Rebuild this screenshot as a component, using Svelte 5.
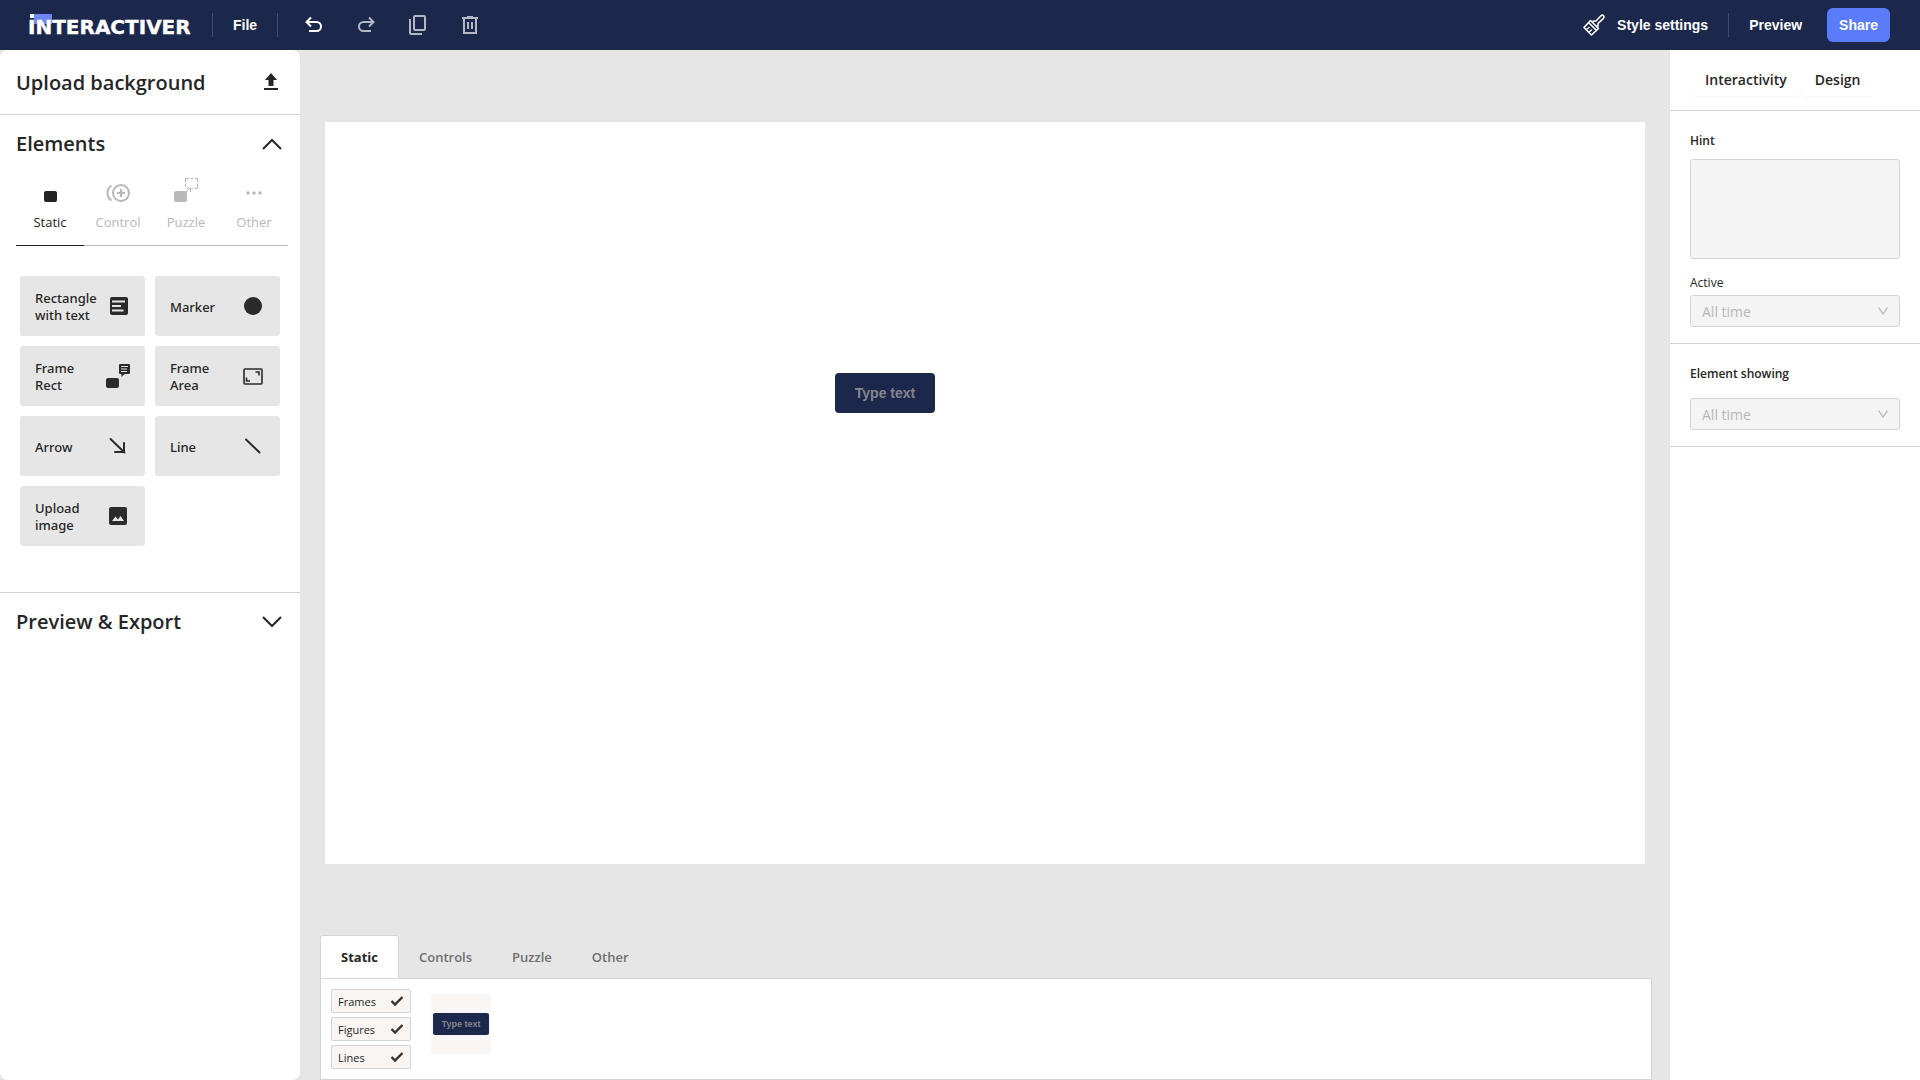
<script>
  const staticTabs = [
    { id: 'static', label: 'Static' },
    { id: 'control', label: 'Control' },
    { id: 'puzzle', label: 'Puzzle' },
    { id: 'other', label: 'Other' }
  ];
  const elements = [
    { icon: 'text', label: 'Rectangle with text' },
    { icon: 'marker', label: 'Marker' },
    { icon: 'frame', label: 'Frame Rect' },
    { icon: 'area', label: 'Frame Area' },
    { icon: 'arrow', label: 'Arrow' },
    { icon: 'line', label: 'Line' },
    { icon: 'image', label: 'Upload image' }
  ];
  const layerTabs = ['Static', 'Controls', 'Puzzle', 'Other'];
  let activeTab = $state('static');
  let activeLayer = $state('Static');
  let filters = $state([
    { label: 'Frames', on: true },
    { label: 'Figures', on: true },
    { label: 'Lines', on: true }
  ]);
</script>

<div class="app">
  <header class="topbar">
    <a class="logo" href="/" aria-label="Interactiver">
      <svg width="172" height="28" viewBox="-4 -2 172 28">
        <path d="M4 1H22V11H4z" fill="#6f86f0" />
        <rect x="0" y="1" width="4" height="4" fill="#fff" />
        <text x="-2" y="21" class="logo-text">INTERACTIVER</text>
      </svg>
    </a>
    <span class="rule"></span>
    <button class="nav file">File</button>
    <span class="rule"></span>
    <div class="tools">
      <button aria-label="Undo">
        <svg width="24" height="24" viewBox="0 0 24 24" fill="none" stroke="#fff" stroke-width="2"><path d="M9 4.5 4.5 9 9 13.500M5 9h9.500a4.500 4.500 0 0 1 0 9H7" /></svg>
      </button>
      <button aria-label="Redo">
        <svg width="24" height="24" viewBox="0 0 24 24" fill="none" stroke="#b4b8c4" stroke-width="2"><path d="M15 4.500 19.500 9 15 13.500M19 9H9.500a4.500 4.500 0 0 0 0 9H17" /></svg>
      </button>
      <button aria-label="Copy">
        <svg width="24" height="24" viewBox="0 0 24 24" fill="none" stroke="#b4b8c4" stroke-width="2"><rect x="8" y="3" width="11" height="14" rx="1" /><path d="M4 6v14a1 1 0 0 0 1 1h11" /></svg>
      </button>
      <button aria-label="Delete">
        <svg width="24" height="24" viewBox="0 0 24 24" fill="none" stroke="#b4b8c4" stroke-width="2"><path d="M4 5h16M9 4h6M6 5v15h12V5M10 9v7M14 9v7" /></svg>
      </button>
    </div>
    <div class="right">
      <button class="nav style">
        <svg width="22" height="22" viewBox="0 0 22 22" fill="none" stroke="#fff" stroke-width="1.600" stroke-linejoin="round" stroke-linecap="round"><path d="M7.500 6.500 15.500 14.500 8.500 21 1 13.500zM9.500 8.500 10.500 7 13 7 18 1.800a1.700 1.700 0 0 1 2.500 2.500L15 9.500v2.500l-1.500 .800M5.500 8.500l8 8M3.500 15.500l2.500-2M6 18l2.500-2" /></svg>
        Style settings
      </button>
      <span class="rule"></span>
      <button class="nav preview">Preview</button>
      <button class="nav share">Share</button>
    </div>
  </header>

  <div class="workspace">
    <aside class="sidebar">
      <button class="section upload">
        Upload background
        <svg width="16" height="18" viewBox="0 0 16 18" fill="#262626"><path d="M8 0 14 7H10.500V13H5.500V7H2zM1 15H15V17H1z" /></svg>
      </button>
      <section class="elements">
        <button class="section head">
          Elements
          <svg width="20" height="12" viewBox="0 0 20 12" fill="none" stroke="#262626" stroke-width="2"><path d="M1 11 10 2 19 11" /></svg>
        </button>
        <div class="tabs" role="tablist">
          {#each staticTabs as tab}
            <button role="tab" aria-selected={activeTab === tab.id} class:active={activeTab === tab.id} onclick={() => (activeTab = tab.id)}>
              <svg width="26" height="26" viewBox="0 0 26 26" fill="none" stroke="currentColor">
                {#if tab.id === 'static'}
                  <rect x="7" y="13" width="13" height="11" rx="2" fill="currentColor" stroke="none" />
                {:else if tab.id === 'control'}
                  <g stroke-width="2"><circle cx="16" cy="15" r="8" /><path d="M16 11v8M12 15h8M6.500 7.500a9 9 0 0 0 0 15" /></g>
                {:else if tab.id === 'puzzle'}
                  <rect x="1" y="13" width="13" height="11" rx="2" fill="currentColor" stroke="none" />
                  <path d="M12.500 4V.500H16M17.500 .500h2.500M21.500 .500h3V4M24.500 5.500v5H21.500M20 10.500h-1.500M12.500 5.500v3" />
                  <path d="M12 15 17 10M13.500 10H17.500V14" />
                {:else}
                  <g fill="currentColor" stroke="none"><circle cx="7" cy="15" r="1.700" /><circle cx="13" cy="15" r="1.700" /><circle cx="19" cy="15" r="1.700" /></g>
                {/if}
              </svg>
              {tab.label}
            </button>
          {/each}
        </div>
        <div class="cards">
          {#each elements as el}
            <button class="card">
              <span>{el.label}</span>
              <svg width="26" height="26" viewBox="0 0 26 26" fill="none" stroke="#2b2b2b" stroke-width="2">
                {#if el.icon === 'text'}
                  <rect x="5" y="4" width="18" height="18" rx="2" fill="#2b2b2b" stroke="none" />
                  <path d="M7 8.500h13M7 13h9M7 17.500h11.500" stroke="#e6e6e6" />
                {:else if el.icon === 'marker'}
                  <circle cx="13" cy="13" r="9" fill="#2b2b2b" stroke="none" />
                {:else if el.icon === 'frame'}
                  <g fill="#2b2b2b" stroke="none"><rect x="1" y="15" width="13" height="10" rx="2" /><path d="M15 1H24a1 1 0 0 1 1 1V10a1 1 0 0 1-1 1H19.500L16.500 14V11H15a1 1 0 0 1-1-1V2a1 1 0 0 1 1-1z" /></g>
                  <path d="M16 3.500h7M16 6h6M16 8.500h6" stroke="#e6e6e6" stroke-width="1" />
                {:else if el.icon === 'area'}
                  <rect x="4" y="6" width="18" height="15" rx="1" stroke-width="1.600" />
                  <path d="M15.500 9H19V12.500M6.500 14.500V18H10" stroke-width="1.600" />
                {:else if el.icon === 'arrow'}
                  <path d="M5.500 6 19.500 19.500M19 10V19H10" stroke-linecap="round" />
                {:else if el.icon === 'line'}
                  <path d="M6 6.500 19.500 19.500" stroke-linecap="round" />
                {:else}
                  <rect x="4" y="4" width="18" height="18" rx="2" fill="#2b2b2b" stroke="none" />
                  <path d="M7 18 10.500 13.500 13 16.500 15.500 13 19 18z" fill="#e6e6e6" stroke="none" />
                {/if}
              </svg>
            </button>
          {/each}
        </div>
      </section>
      <button class="section head">
        Preview &amp; Export
        <svg width="20" height="12" viewBox="0 0 20 12" fill="none" stroke="#262626" stroke-width="2"><path d="M1 1 10 10 19 1" /></svg>
      </button>
    </aside>

    <main>
      <div class="stage">
        <div class="canvas">
          <button class="shape">Type text</button>
        </div>
      </div>
      <div class="layers">
        <div class="layer-tabs" role="tablist">
          {#each layerTabs as tab}
            <button role="tab" aria-selected={activeLayer === tab} class:active={activeLayer === tab} onclick={() => (activeLayer = tab)}>{tab}</button>
          {/each}
        </div>
        <div class="layer-body">
          <div class="filters">
            {#each filters as f}
              <label>
                {f.label}
                <input type="checkbox" bind:checked={f.on} />
                <svg width="14" height="12" viewBox="0 0 14 12" fill="none" stroke="#333" stroke-width="2.400"><path d="M1.500 6 5 9.500 12.500 2" /></svg>
              </label>
            {/each}
          </div>
          <button class="thumb"><span>Type text</span></button>
        </div>
      </div>
    </main>

    <aside class="props">
      <div class="prop-tabs">
        <button>Interactivity</button>
        <button>Design</button>
      </div>
      <div class="group">
        <label class="title" for="hint">Hint</label>
        <textarea id="hint" disabled></textarea>
        <label class="sub" for="active">Active</label>
        <div class="select">
          <select id="active" disabled><option>All time</option></select>
          <svg width="12" height="10" viewBox="0 0 12 10" fill="none" stroke="#b8b8b8" stroke-width="1.300"><path d="M1.500 1.500 6 8 10.500 1.500" /></svg>
        </div>
      </div>
      <div class="group">
        <label class="title wide" for="showing">Element showing</label>
        <div class="select">
          <select id="showing" disabled><option>All time</option></select>
          <svg width="12" height="10" viewBox="0 0 12 10" fill="none" stroke="#b8b8b8" stroke-width="1.300"><path d="M1.500 1.500 6 8 10.500 1.500" /></svg>
        </div>
      </div>
    </aside>
  </div>
</div>

<style>
  :global(body) { margin: 0; }
  .app {
    display: flex;
    flex-direction: column;
    min-height: 100vh;
    background: #e6e6e6;
    color: #262626;
    font-family: 'Open Sans', 'Noto Sans', sans-serif;
    font-size: 13px;
  }
  .app * { box-sizing: border-box; }
  button {
    font: inherit;
    color: inherit;
    background: none;
    border: 0;
    padding: 0;
    cursor: pointer;
  }
  svg { flex: none; display: block; overflow: visible; }

  .topbar {
    display: flex;
    align-items: center;
    height: 50px;
    padding: 0 30px 0 26px;
    background: #1c274c;
    color: #fff;
  }
  .logo { margin-right: 14px; }
  .logo-text {
    font-family: 'DejaVu Sans', sans-serif;
    font-size: 20px;
    font-weight: 700;
    fill: #fff;
    stroke: #fff;
    stroke-width: 0.4;
  }
  .rule { width: 1px; height: 24px; background: #414b6b; }
  .nav {
    font-family: 'Liberation Sans', Arial, sans-serif;
    font-size: 14px;
    font-weight: 700;
  }
  .file { padding: 0 20px; }
  .tools { display: flex; gap: 28px; margin-left: 24px; }
  .right { display: flex; align-items: center; margin-left: auto; }
  .style { display: flex; align-items: center; gap: 12px; margin-right: 20px; }
  .preview { margin: 0 25px 0 20px; }
  .share {
    height: 34px;
    padding: 0 12px;
    border-radius: 6px;
    background: #5b7cfa;
  }

  .workspace { display: flex; flex: 1; }
  .sidebar {
    width: 300px;
    flex: none;
    background: #fff;
    border-radius: 8px;
  }
  .section {
    display: flex;
    align-items: center;
    justify-content: space-between;
    width: 100%;
    padding: 0 18px 0 16px;
    font-size: 20px;
    font-weight: 600;
  }
  .upload { height: 65px; padding-right: 21px; border-bottom: 1px solid #d4d4d4; }
  .head { height: 57px; }
  .elements { border-bottom: 1px solid #d4d4d4; padding-bottom: 46px; }
  .tabs {
    display: grid;
    grid-template-columns: repeat(4, 1fr);
    margin: 3px 12px 0 16px;
  }
  .tabs button {
    display: flex;
    flex-direction: column;
    align-items: center;
    gap: 6px;
    height: 71px;
    padding-top: 3px;
    line-height: 24px;
    color: #b8b8b8;
    border-bottom: 1px solid #b8b8b8;
  }
  .tabs .active { color: #222; border-color: #222; }
  .cards {
    display: grid;
    grid-template-columns: 1fr 1fr;
    gap: 10px;
    padding: 30px 20px 0;
  }
  .card {
    display: flex;
    align-items: center;
    justify-content: space-between;
    height: 60px;
    padding: 0 14px 0 15px;
    border-radius: 3px;
    background: #e6e6e6;
    text-align: left;
    font-family: 'Noto Sans', sans-serif;
    font-weight: 500;
    line-height: 17px;
  }
  .card span { width: 66px; padding-top: 2px; }

  main { flex: 1; display: flex; flex-direction: column; min-width: 0; }
  .stage {
    flex: 1;
    display: flex;
    align-items: center;
    padding: 1px 25px 0;
  }
  .canvas {
    position: relative;
    width: 100%;
    aspect-ratio: 16 / 9;
    background: #fff;
  }
  .shape {
    position: absolute;
    left: 510px;
    top: 251px;
    width: 100px;
    height: 40px;
    border-radius: 4px;
    background: #1c274c;
    color: #85858c;
    font: 700 14px 'Liberation Sans', Arial, sans-serif;
  }
  .layers { margin: 0 18px 0 20px; }
  .layer-tabs { display: flex; }
  .layer-tabs button {
    height: 43px;
    padding: 0 19px;
    border: 1px solid transparent;
    border-bottom: 0;
    border-radius: 3px 3px 0 0;
    color: #707070;
    font-weight: 600;
  }
  .layer-tabs .active {
    padding: 0 20px;
    background: #fff;
    border-color: #d4d4d4;
    color: #262626;
    font-weight: 700;
  }
  .layer-body {
    display: flex;
    align-items: flex-start;
    gap: 20px;
    padding: 10px;
    background: #fff;
    border: 1px solid #d4d4d4;
  }
  .filters { display: flex; flex-direction: column; gap: 4px; }
  .filters label {
    display: flex;
    align-items: center;
    justify-content: space-between;
    width: 80px;
    height: 24px;
    padding: 0 6px;
    border: 1px solid #d4d4d4;
    border-radius: 2px;
    background: #f8f5f3;
    font-size: 11px;
  }
  .filters input {
    appearance: none;
    width: 0;
    height: 0;
    margin: 0;
  }
  .filters input:not(:checked) + svg { visibility: hidden; }
  .thumb {
    display: flex;
    align-items: center;
    width: 60px;
    height: 60px;
    margin-top: 5px;
    padding: 0 2px;
    border-radius: 2px;
    background: #f8f5f3;
  }
  .thumb span {
    flex: 1;
    border-radius: 2px;
    background: #1c274c;
    color: #85858c;
    font: 700 9px/22px 'Liberation Sans', Arial, sans-serif;
  }

  .props { width: 250px; flex: none; background: #fff; }
  .prop-tabs {
    display: flex;
    align-items: center;
    height: 61px;
    padding: 0 21px 2px;
    border-bottom: 1px solid #d4d4d4;
    font-size: 14px;
    font-weight: 600;
  }
  .prop-tabs button {
    height: 33px;
    padding: 0 14px;
    border-radius: 6px;
    box-shadow: 0 2px 0 #fafafa;
  }
  .group {
    display: flex;
    flex-direction: column;
    padding: 20px 20px 16px;
    border-bottom: 1px solid #d4d4d4;
  }
  .title { font-size: 12px; font-weight: 600; line-height: 20px; margin-bottom: 8px; }
  .wide { margin-bottom: 14px; }
  .sub { font-size: 12px; line-height: 20px; margin: 14px 0 2px; }
  textarea {
    height: 100px;
    border: 1px solid #d4d4d4;
    border-radius: 3px;
    background: #f4f4f4;
    resize: none;
  }
  .select { display: grid; align-items: center; }
  .select > * { grid-area: 1 / 1; }
  .select svg { justify-self: end; margin-right: 11px; pointer-events: none; }
  select {
    appearance: none;
    width: 100%;
    height: 32px;
    padding: 0 11px;
    border: 1px solid #d4d4d4;
    border-radius: 3px;
    background: #f4f4f4;
    color: #b8b8b8;
    font: 14px 'Open Sans', 'Noto Sans', sans-serif;
    opacity: 1;
  }
</style>
